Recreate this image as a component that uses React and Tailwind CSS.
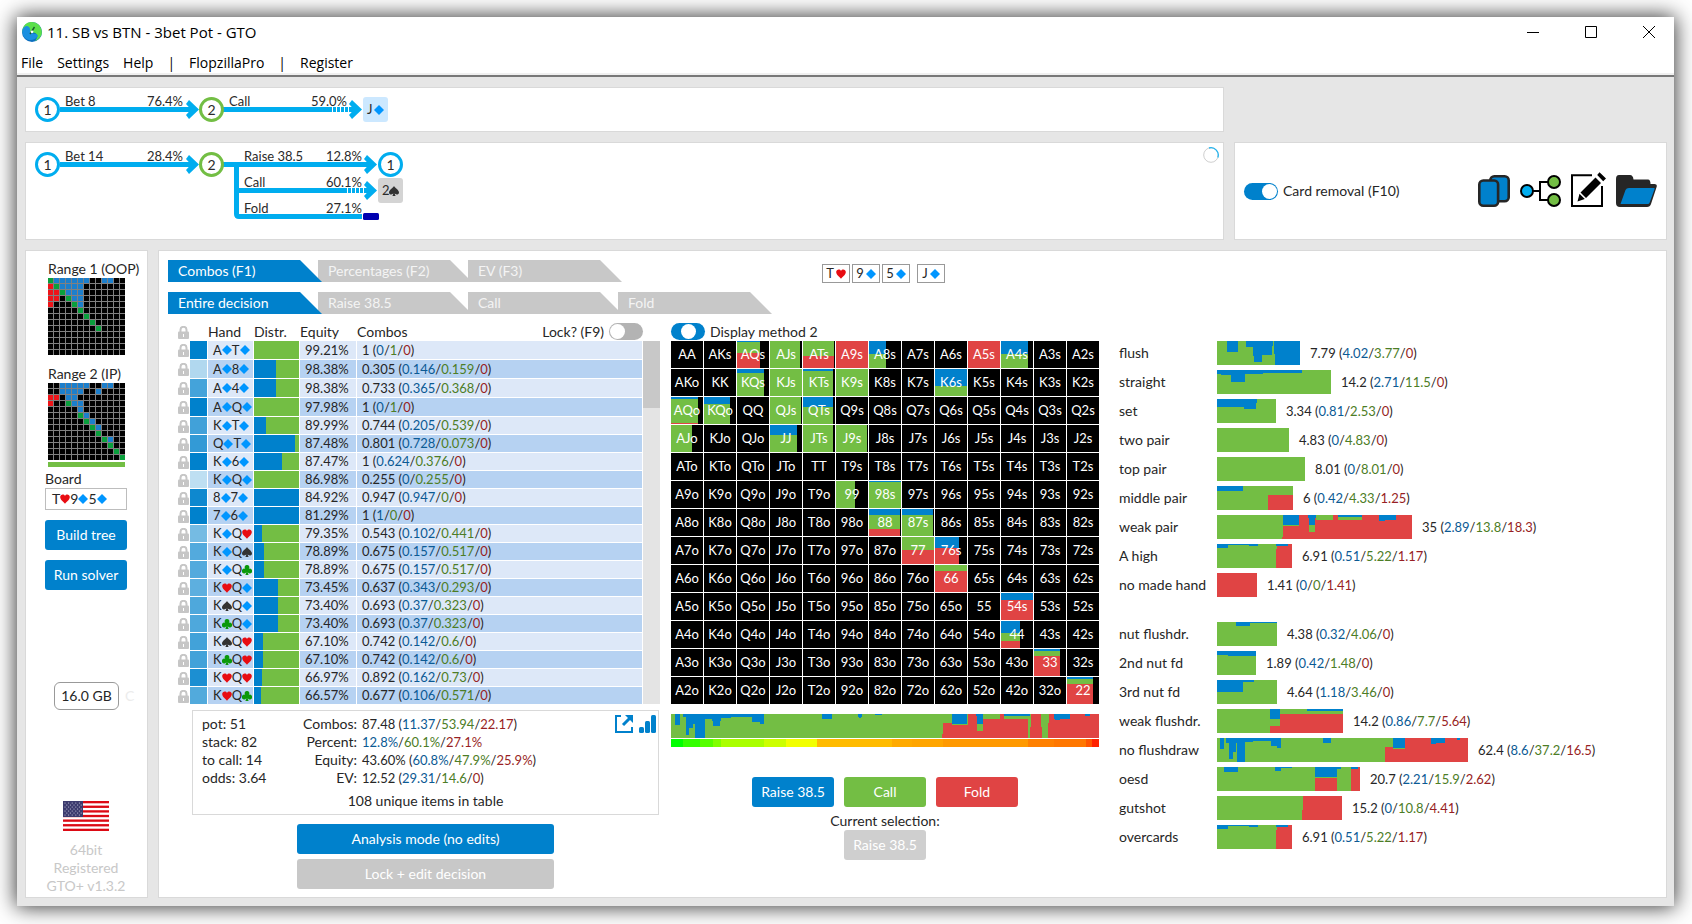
import React from "react";

const BLUE = "#0081cc";
const GREEN = "#73be44";
const RED = "#e04444";
const SKY = "#00adef";

const SUITS = {
  h: { name: "hearts", color: "#e80c12", path: "M5 9.8 C3.6 7.6 0.2 6 0.2 3 C0.2 0.2 4 -0.4 5 2 C6 -0.4 9.8 0.2 9.8 3 C9.8 6 6.4 7.6 5 9.8 Z" },
  d: { name: "diamonds", color: "#0096ff", path: "M5 0 L10 5 L5 10 L0 5 Z" },
  s: { name: "spades", color: "#333333", path: "M5 0 C6 2 10 4 10 6.4 C10 8.6 7 9 5.6 7.6 L6.6 10 H3.4 L4.4 7.6 C3 9 0 8.6 0 6.4 C0 4 4 2 5 0 Z" },
  c: { name: "clubs", color: "#0a990a", path: "M5 0 A2.3 2.3 0 0 1 6.8 3.8 A2.4 2.4 0 1 1 5.6 7 L6.6 10 H3.4 L4.4 7 A2.4 2.4 0 1 1 3.2 3.8 A2.3 2.3 0 0 1 5 0 Z" },
};

// [hand, equity, combos, raise, call, fold]
const HANDS = [
  ["AdTd", "99.21%", "1", "0", "1", "0"],
  ["Ad8d", "98.38%", "0.305", "0.146", "0.159", "0"],
  ["Ad4d", "98.38%", "0.733", "0.365", "0.368", "0"],
  ["AdQd", "97.98%", "1", "0", "1", "0"],
  ["KdTd", "89.99%", "0.744", "0.205", "0.539", "0"],
  ["QdTd", "87.48%", "0.801", "0.728", "0.073", "0"],
  ["Kd6d", "87.47%", "1", "0.624", "0.376", "0"],
  ["KdQd", "86.98%", "0.255", "0", "0.255", "0"],
  ["8d7d", "84.92%", "0.947", "0.947", "0", "0"],
  ["7d6d", "81.29%", "1", "1", "0", "0"],
  ["KdQh", "79.35%", "0.543", "0.102", "0.441", "0"],
  ["KdQs", "78.89%", "0.675", "0.157", "0.517", "0"],
  ["KdQc", "78.89%", "0.675", "0.157", "0.517", "0"],
  ["KhQd", "73.45%", "0.637", "0.343", "0.293", "0"],
  ["KsQd", "73.40%", "0.693", "0.37", "0.323", "0"],
  ["KcQd", "73.40%", "0.693", "0.37", "0.323", "0"],
  ["KsQh", "67.10%", "0.742", "0.142", "0.6", "0"],
  ["KcQh", "67.10%", "0.742", "0.142", "0.6", "0"],
  ["KhQh", "66.97%", "0.892", "0.162", "0.73", "0"],
  ["KhQc", "66.57%", "0.677", "0.106", "0.571", "0"],
];

// [width of 32, raise height, call height, fold height] of a 32x27 cell
const CELLS = {
  AQs: [23, 1, 11, 15], AJs: [30, 0, 27, 0], ATs: [31, 0, 15, 12], A9s: [32, 0, 0, 27],
  A8s: [17, 13, 14, 0], A5s: [32, 0, 0, 27], A4s: [27, 13, 14, 0],
  KQs: [27, 4, 23, 0], KJs: [32, 0, 27, 0], KTs: [30, 2, 25, 0], K9s: [32, 0, 27, 0], K6s: [32, 17, 10, 0],
  AQo: [27, 2, 24, 1], KQo: [26, 7, 20, 0], QJs: [31, 0, 27, 0], QTs: [30, 10, 17, 0],
  AJo: [21, 0, 27, 0], JJ: [27, 10, 17, 0], JTs: [30, 0, 27, 0], J9s: [31, 0, 27, 0],
  99: [19, 0, 27, 0], "98s": [32, 1, 26, 0], 88: [31, 6, 14, 7], "87s": [31, 6, 21, 0],
  77: [32, 0, 13, 14], "76s": [24, 11, 0, 16], 66: [32, 0, 6, 21], "54s": [32, 7, 0, 20],
  44: [19, 12, 8, 7], 33: [26, 2, 5, 20], 22: [26, 2, 5, 20],
};

const RANKS = "AKQJT98765432".split("");

// b = suited, g = pair, r = offsuit
const RANGE_OOP = [
  "gbbbbbb..bb..", "rgbbbb.......", "rrgbbb.......", "rr.gbb.......", "r...gb.......",
  ".....g.......", "......g......", ".......g.....", "........g....", ".............",
  ".............", ".............", ".............",
];
const RANGE_IP = [
  "..bbbbb..bb..", "..bbbb..b....", "rr.bb........", "r..gbb.......", ".....b.......",
  ".....gb......", "......gb.....", ".......gb....", "........g....", ".........gb..",
  "..........g..", "...........g.", "............g",
];

// bar parts are [x, y, width, height, color] painted over green
const A_HIGH = [[60, 0, 15, 24, RED], [59, 5, 1, 19, RED], [0, 0, 11, 4, BLUE], [11, 0, 21, 1, BLUE], [32, 0, 9, 2, BLUE], [59, 0, 12, 2, BLUE]];

const MADE_HANDS = [
  ["flush", 83, "7.79", "4.02", "3.77", "0", [[10, 0, 11, 11, BLUE], [29, 0, 8, 6, BLUE], [36, 0, 1, 15, BLUE], [37, 0, 8, 21, BLUE], [45, 0, 10, 14, BLUE], [55, 0, 1, 5, BLUE], [57, 0, 1, 13, BLUE], [58, 0, 25, 24, BLUE]]],
  ["straight", 114, "14.2", "2.71", "11.5", "0", [[0, 0, 4, 4, BLUE], [4, 0, 10, 5, BLUE], [14, 0, 14, 12, BLUE], [28, 0, 18, 4, BLUE], [46, 0, 39, 3, BLUE]]],
  ["set", 59, "3.34", "0.81", "2.53", "0", [[0, 0, 27, 8, BLUE], [27, 0, 12, 10, BLUE], [39, 0, 1, 4, BLUE]]],
  ["two pair", 72, "4.83", "0", "4.83", "0", []],
  ["top pair", 88, "8.01", "0", "8.01", "0", []],
  ["middle pair", 76, "6", "0.42", "4.33", "1.25", [[0, 0, 26, 5, BLUE], [51, 9, 25, 15, RED]]],
  ["weak pair", 195, "35", "2.89", "13.8", "18.3", [[66, 11, 16, 13, RED], [65, 22, 1, 2, RED], [82, 0, 113, 24, RED], [66, 0, 16, 10, BLUE], [91, 0, 8, 3, BLUE], [92, 3, 6, 7, BLUE], [92, 10, 6, 7, GREEN], [99, 0, 17, 5, GREEN], [121, 2, 24, 3, GREEN], [121, 0, 24, 2, BLUE], [162, 0, 6, 6, BLUE], [168, 0, 11, 5, BLUE]]],
  ["A high", 75, "6.91", "0.51", "5.22", "1.17", A_HIGH],
  ["no made hand", 40, "1.41", "0", "0", "1.41", [[0, 0, 40, 24, RED]]],
];

const DRAWS = [
  ["nut flushdr.", 60, "4.38", "0.32", "4.06", "0", [[19, 0, 41, 1, BLUE], [19, 0, 14, 4, BLUE]]],
  ["2nd nut fd", 39, "1.89", "0.42", "1.48", "0", [[0, 0, 11, 4, BLUE], [11, 0, 28, 5, BLUE]]],
  ["3rd nut fd", 60, "4.64", "1.18", "3.46", "0", [[0, 0, 26, 12, BLUE], [26, 0, 11, 2, BLUE]]],
  ["weak flushdr.", 126, "14.2", "0.86", "7.7", "5.64", [[53, 0, 10, 10, BLUE], [53, 17, 10, 7, RED], [63, 5, 63, 19, RED], [90, 0, 36, 2, BLUE]]],
  ["no flushdraw", 251, "62.4", "8.6", "37.2", "16.5", [[3, 0, 4, 11, BLUE], [9, 0, 11, 5, BLUE], [12, 0, 4, 21, BLUE], [16, 0, 3, 14, BLUE], [20, 0, 8, 24, BLUE], [28, 0, 8, 4, BLUE], [36, 0, 18, 3, BLUE], [54, 0, 6, 8, BLUE], [60, 0, 4, 10, BLUE], [106, 0, 8, 5, BLUE], [168, 9, 8, 15, RED], [176, 11, 12, 13, RED], [176, 0, 12, 10, BLUE], [188, 0, 63, 24, RED], [214, 0, 5, 6, BLUE], [219, 0, 9, 5, BLUE], [240, 0, 3, 2, BLUE]]],
  ["oesd", 143, "20.7", "2.21", "15.9", "2.62", [[7, 0, 14, 5, BLUE], [58, 0, 6, 4, BLUE], [64, 0, 11, 1, BLUE], [98, 11, 22, 13, RED], [98, 0, 22, 10, BLUE], [120, 0, 4, 2, BLUE], [134, 0, 9, 24, RED], [134, 0, 7, 2, BLUE]]],
  ["gutshot", 125, "15.2", "0", "10.8", "4.41", [[86, 0, 39, 24, RED], [85, 14, 1, 10, RED]]],
  ["overcards", 75, "6.91", "0.51", "5.22", "1.17", A_HIGH],
];

const HISTOGRAM = [
  [4, 0, 5, 11, BLUE], [12, 0, 3, 3, BLUE], [15, 0, 3, 21, BLUE], [18, 0, 4, 14, BLUE], [22, 0, 2, 10, BLUE],
  [24, 0, 10, 24, BLUE], [34, 0, 7, 5, BLUE], [41, 0, 1, 7, BLUE], [42, 0, 7, 12, BLUE], [49, 0, 1, 7, BLUE],
  [50, 0, 10, 4, BLUE], [60, 0, 21, 3, BLUE], [81, 0, 8, 8, BLUE], [89, 0, 4, 10, BLUE], [151, 0, 10, 5, BLUE],
  [187, 0, 4, 3, BLUE], [188, 3, 2, 1, BLUE], [204, 0, 7, 1, BLUE], [271, 20, 1, 4, RED], [272, 9, 9, 15, RED],
  [281, 11, 15, 13, RED], [281, 0, 15, 10, BLUE], [297, 0, 9, 24, RED], [296, 11, 1, 13, RED], [305, 0, 7, 2, BLUE],
  [306, 0, 6, 10, BLUE], [306, 17, 6, 7, RED], [312, 5, 45, 19, RED], [329, 0, 4, 5, RED], [333, 0, 26, 2, BLUE],
  [359, 13, 1, 11, RED], [360, 0, 10, 24, RED], [370, 13, 1, 11, RED], [377, 9, 1, 15, RED], [378, 0, 50, 24, RED],
  [383, 0, 16, 5, BLUE], [384, 5, 5, 1, BLUE], [414, 0, 5, 2, BLUE],
];

const HEAT = [
  [12, "#00ff00"], [17, "#33ff00"], [13, "#55ff00"], [8, "#80ff00"], [43, "#aaff00"], [22, "#ccff00"],
  [31, "#f2ff00"], [75, "#ffbb00"], [20, "#ffaa00"], [31, "#ffa500"], [85, "#ff9900"], [26, "#ff8000"],
  [32, "#ff7700"], [6, "#ff5500"], [7, "#ff2200"],
];

function Suit({ suit }) {
  const { name, color, path } = SUITS[suit];
  return (
    <svg role="img" aria-label={name} className="inline-block size-2.5" viewBox="0 0 10 10">
      <path d={path} fill={color} />
    </svg>
  );
}

function Cards({ cards }) {
  return (
    <span className="inline-flex items-center">
      {cards.match(/../g).map((card, index) => (
        <React.Fragment key={index}>
          {card[0]}
          <Suit suit={card[1]} />
        </React.Fragment>
      ))}
    </span>
  );
}

function Split({ raise, call, fold }) {
  return (
    <>
      <span className="text-[#0b5a94]">{raise}</span>/<span className="text-[#4d7d26]">{call}</span>/
      <span className="text-[#981f24]">{fold}</span>
    </>
  );
}

function Lock() {
  return (
    <svg aria-hidden="true" className="block h-[13px] w-[11px]" viewBox="0 0 11 13">
      <path d="M2.5 6 V3.8 a3 3 0 0 1 6 0 V6" fill="none" stroke="#c6c6c6" strokeWidth="2" />
      <rect y="5.5" width="11" height="7.5" rx="1" fill="#c6c6c6" />
      <path d="M5 8h1v3H5z" fill="#fff" />
    </svg>
  );
}

function Logo() {
  return (
    <svg aria-hidden="true" className="size-5" viewBox="0 0 20 20">
      <circle cx="10" cy="10" r="10" fill="#0c6fc0" />
      <path d="M1 6 C3 1 8 -1 13 0.6 C18 2.4 21 8 19.4 13 C18 16 15 18.6 13 19 C17 14 15 11 11 10.6 C8 10.4 5 12 1.6 12 C0.2 10 0.2 8 1 6 Z" fill="#5be04a" />
      <path d="M0.4 8 C2 4 5 3 7 5 C9 7 7 10 9 11 C12 12.4 15 11 16 14 C13 19 6 19 3 16 C1 14 0 11 0.4 8 Z" fill="#1a8fe0" />
      <path d="M8 12 L12.5 5" stroke="#185c2a" strokeWidth="1.4" />
      <circle cx="10" cy="9.8" r="1.4" fill="#fff" />
    </svg>
  );
}

function Header() {
  const control = "flex size-3 items-center justify-center";
  return (
    <header className="border-b-2 border-[#787878] bg-white font-['Open_Sans',sans-serif] text-black">
      <div className="flex h-[30px] items-center gap-[5px] pl-[5px] pr-[19px]">
        <Logo />
        <h1 className="text-[15px] leading-5">11. SB vs BTN - 3bet Pot - GTO</h1>
        <div className="ml-auto flex gap-[46px]">
          <button aria-label="Minimize" className={control}>
            <svg className="size-3" viewBox="0 0 12 12" stroke="#000"><path d="M0 6.5h12" /></svg>
          </button>
          <button aria-label="Maximize" className={control}>
            <svg className="size-3" viewBox="0 0 12 12" stroke="#000" fill="none"><path d="M.5.5h11v11H.5z" /></svg>
          </button>
          <button aria-label="Close" className={control}>
            <svg className="size-3" viewBox="0 0 12 12" stroke="#000"><path d="M0 0l12 12M12 0L0 12" /></svg>
          </button>
        </div>
      </div>
      <nav className="flex h-7 items-center gap-3.5 border-b-2 border-[#f0f0f0] pl-1 pt-1.5 text-sm leading-5">
        <button>File</button>
        <button>Settings</button>
        <button>Help</button>
        <span>|</span>
        <button>FlopzillaPro</button>
        <span>|</span>
        <button>Register</button>
      </nav>
    </header>
  );
}

function Node({ x, y, label, color }) {
  return (
    <>
      <circle cx={x} cy={y} r="11" fill="#fff" stroke={color} strokeWidth="3" />
      <text x={x} y={y + 5} textAnchor="middle" fontSize="14">{label}</text>
    </>
  );
}

function Arrow({ from, to, y, dashed }) {
  return (
    <g fill={SKY}>
      <rect x={from} y={y - 2.5} width={to - 4 - from} height="5" />
      <path d={`M${to - 10} ${y - 9.5} L${to} ${y} L${to - 10} ${y + 9.5} L${to - 13} ${y + 5.5} L${to - 8} ${y} L${to - 13} ${y - 5.5} Z`} />
      {dashed && [30, 26, 22, 18, 14].map((d) => <rect key={d} x={to - d} y={y - 2.5} width="1" height="5" fill="#fff" />)}
    </g>
  );
}

function Step({ x, end, y, label, percent }) {
  return (
    <>
      <text x={x} y={y}>{label}</text>
      <text x={end} y={y} textAnchor="end">{percent}</text>
    </>
  );
}

function TreeCard({ x, y, rank, suit, fill }) {
  return (
    <>
      <rect x={x} y={y} width="25" height="25" rx="3" fill={fill} />
      <text x={x + 4} y={y + 17}>{rank}</text>
      <g transform={`translate(${x + 11} ${y + 8})`}>
        <path d={SUITS[suit].path} fill={SUITS[suit].color} />
      </g>
    </>
  );
}

function FlopTree() {
  return (
    <svg className="block" width="400" height="43" viewBox="26 88 400 43" fontSize="13" fill="#2a2a2a">
      <Arrow from={60} to={199} y={109.5} />
      <Arrow from={223} to={362} y={109.5} dashed />
      <Node x={47.5} y={109.5} label="1" color={SKY} />
      <Node x={211.5} y={109.5} label="2" color={GREEN} />
      <Step x={65} end={183} y={106} label="Bet 8" percent="76.4%" />
      <Step x={229} end={347} y={106} label="Call" percent="59.0%" />
      <TreeCard x={363} y={97} rank="J" suit="d" fill="#cce8ff" />
    </svg>
  );
}

function TurnTree() {
  return (
    <svg className="block" width="400" height="96" viewBox="26 143 400 96" fontSize="13" fill="#2a2a2a">
      <Arrow from={60} to={199} y={164.5} />
      <Arrow from={223} to={377} y={164.5} />
      <Arrow from={238} to={377} y={190.5} dashed />
      <path d="M236.5 164 V214 Q236.5 216.5 239 216.5 H362" fill="none" stroke={SKY} strokeWidth="5" />
      <rect x="363" y="213" width="16" height="7" rx="1.5" fill="#0000b0" />
      <Node x={47.5} y={164.5} label="1" color={SKY} />
      <Node x={211.5} y={164.5} label="2" color={GREEN} />
      <Node x={390.5} y={164.5} label="1" color={SKY} />
      <Step x={65} end={183} y={161} label="Bet 14" percent="28.4%" />
      <Step x={244} end={362} y={161} label="Raise 38.5" percent="12.8%" />
      <Step x={244} end={362} y={187} label="Call" percent="60.1%" />
      <Step x={244} end={362} y={213} label="Fold" percent="27.1%" />
      <TreeCard x={378} y={178} rank="2" suit="s" fill="#d4d4d4" />
    </svg>
  );
}

function Toggle({ id, className, ...props }) {
  return (
    <input
      id={id}
      type="checkbox"
      className={`flex h-[17px] w-[34px] shrink-0 appearance-none items-center rounded-full px-px before:size-[15px] before:rounded-full before:bg-white ${className}`}
      {...props}
    />
  );
}

function Toolbar() {
  return (
    <section className="flex w-[433px] shrink-0 items-center border border-[#d9d9d9] bg-white pl-[9px] pr-[9px]">
      <Toggle id="card_removal" className="justify-end bg-[#0081cc]" defaultChecked />
      <label htmlFor="card_removal" className="ml-[5px]">Card removal (F10)</label>
      <div className="ml-auto flex items-end gap-2.5 pb-1">
        <button aria-label="Cards">
          <svg className="block h-8 w-8" viewBox="0 0 32 32" fill={BLUE} stroke="#262626" strokeWidth="2.6">
            <rect x="12.3" y="1.3" width="18.4" height="25" rx="4" />
            <rect x="1.3" y="5.5" width="18.8" height="25.2" rx="4" />
          </svg>
        </button>
        <button aria-label="Tree">
          <svg className="block h-8 w-[41px]" viewBox="0 0 41 32" stroke="#000" strokeWidth="2">
            <path d="M12 16h8M28 7h-8v18h8" fill="none" />
            <circle cx="7" cy="16" r="6" fill={SKY} />
            <circle cx="34" cy="7" r="6" fill={GREEN} />
            <circle cx="34" cy="25" r="6" fill={GREEN} />
          </svg>
        </button>
        <button aria-label="Edit">
          <svg className="block h-[35px] w-[35px]" viewBox="0 0 35 35">
            <path d="M21 3.2H1V34h30V14" fill="none" stroke="#000" strokeWidth="2" />
            <path d="M24.5 5.5 L30 11 L15 26 L9.5 20.5 Z M8.5 21.8 L13.8 27 L6.5 29.5 Z M28.5 0.3 L35 6.6 L32.2 9.2 L26.2 3 Z" fill="#000" />
          </svg>
        </button>
        <button aria-label="Open">
          <svg className="block h-8 w-[41px]" viewBox="0 0 41 32">
            <path d="M3 0 H14 Q17 0 17.5 4.5 H32 Q34.5 4.5 34.5 9 H38.5 Q41.6 9 40.6 12 L35 29 Q34 32 31 32 H4 Q0 32 0 28 V4 Q0 0 3 0 Z" fill="#262626" />
            <path d="M13 13 H38 Q39 13 38.6 14 L33.5 28 Q33 29 32 29 H4.5 L9.5 15 Q10.4 13 13 13 Z" fill={BLUE} />
          </svg>
        </button>
      </div>
    </section>
  );
}

function RangeGrid({ rows }) {
  const colors = { b: "bg-[#1c7fcc]", g: "bg-[#0aa03c]", r: "bg-[#ee1418]", ".": "bg-black" };
  return (
    <div className="grid w-[77px] auto-rows-[5px] grid-cols-13 gap-px bg-[#808080]">
      {rows.join("").split("").map((c, index) => <i key={index} className={colors[c]} />)}
    </div>
  );
}

function Flag() {
  return (
    <svg role="img" aria-label="United States" className="block h-[30px] w-[46px]" viewBox="0 0 46 30">
      <rect width="46" height="30" fill="#fff" />
      {[0, 1, 2, 3, 4, 5, 6].map((i) => <rect key={i} y={i * 4.62} width="46" height="2.31" fill="#dc0a14" />)}
      <rect width="20" height="16" fill="#3c3b6e" />
      {[0, 1, 2, 3, 4, 5, 6].map((r) =>
        [0, 1, 2, 3, 4].map((c) => <circle key={`${r}${c}`} cx={2 + c * 3.6 + (r % 2) * 1.8} cy={2 + r * 2} r="0.6" fill="#c8c8dc" />)
      )}
    </svg>
  );
}

const BUTTON = "h-[30px] rounded-[3px] text-center text-sm text-white";

function Sidebar() {
  return (
    <aside className="flex w-[123px] shrink-0 flex-col border border-[#d9d9d9] bg-white pl-[19px] pt-[9px]">
      <div className="pl-[3px]">
        <h2 className="h-[18px] whitespace-nowrap leading-[18px]">Range 1 (OOP)</h2>
        <RangeGrid rows={RANGE_OOP} />
        <h2 className="mt-2.5 h-[18px] leading-[18px]">Range 2 (IP)</h2>
        <RangeGrid rows={RANGE_IP} />
        <div className="mt-0.5 h-[5px] w-[77px] bg-[#73be44]" />
      </div>
      <span id="board_label" className="mt-[3px] h-[18px] leading-[18px]">Board</span>
      <button aria-labelledby="board_label" className="flex h-[22px] w-[82px] items-center border border-[#bdbdbd] pl-1.5">
        <Cards cards="Th9d5d" />
      </button>
      <button className={`${BUTTON} mt-2.5 w-[82px] bg-[#0081cc]`}>Build tree</button>
      <button className={`${BUTTON} mt-2.5 w-[82px] bg-[#0081cc]`}>Run solver</button>
      <div className="mt-[92px] flex items-center gap-1.5 pl-[9px]">
        <span className="flex h-7 w-[65px] items-center justify-center rounded-md border border-[#999]">16.0 GB</span>
        <span className="text-[#ececec]">C</span>
      </div>
      <footer className="mb-0.5 mt-auto flex w-[82px] flex-col items-center whitespace-nowrap text-sm leading-[18px] text-[#c8c8c8]">
        <Flag />
        <p className="mt-2.5">64bit</p>
        <p>Registered</p>
        <p>GTO+ v1.3.2</p>
      </footer>
    </aside>
  );
}

function Tabs({ tabs }) {
  return (
    <div className="isolate flex">
      {tabs.map((tab, index) => (
        <button
          key={tab}
          className={`-mr-1 h-[22px] w-[154px] pl-2.5 text-left text-sm [clip-path:polygon(0_0,132px_0,100%_100%,0_100%)] ${
            index === 0 ? "relative z-10 bg-[#0081cc] text-white" : "bg-[#c8c8c8] text-[#f4f4f4]"
          }`}
        >
          {tab}
        </button>
      ))}
    </div>
  );
}

function HandTable() {
  const th = "p-0 text-left font-normal";
  return (
    <div className="flex">
      <table className="w-[465px] table-fixed border-separate border-spacing-0">
        <colgroup>
          <col className="w-3" />
          <col className="w-[18px]" />
          <col className="w-[46px]" />
          <col className="w-[46px]" />
          <col className="w-[57px]" />
          <col />
        </colgroup>
        <thead>
          <tr className="h-[18px] leading-[18px]">
            <th className={th}><Lock /></th>
            <th className={th}></th>
            <th className={th}>Hand</th>
            <th className={th}>Distr.</th>
            <th className={th}>Equity</th>
            <th className={th}>
              <div className="flex">
                Combos
                <label htmlFor="lock" className="ml-auto mr-[5px]">Lock? (F9)</label>
                <Toggle id="lock" className="bg-[#b3b3b3]" />
              </div>
            </th>
          </tr>
        </thead>
        <tbody className="text-[13px]">
          {HANDS.map(([hand, equity, combos, raise, call, fold], index) => {
            const share = (100 * raise) / combos;
            const td = `border-b border-r border-white p-0 ${index % 2 ? "bg-[#b6d2f2]" : "bg-[#dde8f8]"}`;
            return (
              <tr key={hand} className={index < 4 ? "h-[19px] leading-[18px]" : "h-[18px] leading-[17px]"}>
                <td className="p-0"><Lock /></td>
                <td className="border-b border-r border-white p-0" style={{ backgroundColor: `rgba(0,129,204,${combos})` }} />
                <td className={`${td} pl-[5px]`}><Cards cards={hand} /></td>
                <td
                  className="border-b border-r border-white p-0"
                  style={{ background: `linear-gradient(to right, ${BLUE} ${share}%, ${GREEN} ${share}%)` }}
                />
                <td className={`${td} pl-[5px]`}>{equity}</td>
                <td className={`${td} pl-[5px]`}>
                  {combos} (<Split raise={raise} call={call} fold={fold} />)
                </td>
              </tr>
            );
          })}
        </tbody>
      </table>
      <div className="mb-px mt-[18px] w-[17px] bg-[#e4e4e4]">
        <div className="h-[67px] bg-[#c8c8c8]" />
      </div>
    </div>
  );
}

function Summary() {
  return (
    <section className="ml-3.5 mr-px mt-[5px] h-[105px] border border-[#d9d9d9] px-[9px] pt-1 leading-[18px]">
      <div className="flex">
        <div className="w-[88px]">
          <p>pot: 51</p>
          <p>stack: 82</p>
          <p>to call: 14</p>
          <p>odds: 3.64</p>
        </div>
        <dl className="grid grid-cols-[67px_auto] gap-x-[5px]">
          <dt className="text-right">Combos:</dt>
          <dd className="text-[13px]">87.48 (<Split raise="11.37" call="53.94" fold="22.17" />)</dd>
          <dt className="text-right">Percent:</dt>
          <dd className="text-[13px]"><Split raise="12.8%" call="60.1%" fold="27.1%" /></dd>
          <dt className="text-right">Equity:</dt>
          <dd className="text-[13px]">43.60% (<Split raise="60.8%" call="47.9%" fold="25.9%" />)</dd>
          <dt className="text-right">EV:</dt>
          <dd className="text-[13px]">12.52 (<Split raise="29.31" call="14.6" fold="0" />)</dd>
        </dl>
        <div className="ml-auto flex gap-1.5">
          <button aria-label="Open in window" className="h-[18px]">
            <svg className="block size-[18px]" viewBox="0 0 18 18" fill="none" stroke={BLUE} strokeWidth="2">
              <path d="M6 1H1v16h16v-5" />
              <path d="M8 10L15 3" strokeWidth="3" />
              <path d="M10 0h8v8z" fill={BLUE} stroke="none" />
            </svg>
          </button>
          <button aria-label="Chart" className="-mr-2 h-[18px]">
            <svg className="block size-[18px]" viewBox="0 0 18 18" fill={BLUE}>
              <rect y="12" width="5" height="6" rx="1.5" />
              <rect x="6" y="6" width="5" height="12" rx="1.5" />
              <rect x="12" width="5" height="18" rx="1.5" />
            </svg>
          </button>
        </div>
      </div>
      <p className="mt-[5px] text-center">108 unique items in table</p>
    </section>
  );
}

function cellStyle([width, raise, call, fold]) {
  const a = (raise / 27) * 100;
  const b = ((raise + call) / 27) * 100;
  return {
    backgroundImage: `linear-gradient(${BLUE} ${a}%, ${GREEN} ${a}%, ${GREEN} ${b}%, ${RED} ${b}%)`,
    backgroundSize: `${(width / 32) * 100}% 100%`,
    backgroundRepeat: "no-repeat",
  };
}

function Matrix() {
  return (
    <div className="grid auto-rows-[27px] grid-cols-13 gap-px text-white">
      {RANKS.map((row, i) =>
        RANKS.map((col, j) => {
          const hand = i === j ? row + row : i < j ? `${row}${col}s` : `${col}${row}o`;
          return (
            <div
              key={hand}
              className="flex items-center justify-center bg-black text-[13px]"
              style={CELLS[hand] && cellStyle(CELLS[hand])}
            >
              {hand}
            </div>
          );
        })
      )}
    </div>
  );
}

function Bar({ width, parts }) {
  return (
    <svg className="block shrink-0" width={width} height="24" shapeRendering="crispEdges" aria-hidden="true">
      <rect width={width} height="24" fill={GREEN} />
      {parts.map(([x, y, w, h, fill], index) => (
        <rect key={index} x={x} y={y} width={w} height={h} fill={fill} />
      ))}
    </svg>
  );
}

function Stats({ rows }) {
  return (
    <ul className="flex flex-col gap-[5px]">
      {rows.map(([name, width, total, raise, call, fold, parts]) => (
        <li key={name} className="flex h-6 items-center whitespace-nowrap">
          <span className="w-[98px] shrink-0">{name}</span>
          <Bar width={width} parts={parts} />
          <span className="ml-2.5 text-[13px]">
            {total} (<Split raise={raise} call={call} fold={fold} />)
          </span>
        </li>
      ))}
    </ul>
  );
}

function BoardCard({ card, className = "" }) {
  return (
    <span className={`flex h-[19px] w-7 items-center justify-center gap-0.5 border border-[#999] text-[13px] ${className}`}>
      {card[0]}
      <Suit suit={card[1]} />
    </span>
  );
}

function Workspace() {
  return (
    <main className="min-w-0 flex-1 border border-[#d9d9d9] bg-white pb-2 pl-[9px] pt-[9px]">
      <div className="flex h-[22px] items-start">
        <Tabs tabs={["Combos (F1)", "Percentages (F2)", "EV (F3)"]} />
        <div className="ml-[204px] mt-1 flex gap-0.5">
          <BoardCard card="Th" />
          <BoardCard card="9d" />
          <BoardCard card="5d" />
          <BoardCard card="Jd" className="ml-[5px]" />
        </div>
      </div>
      <div className="mt-2.5">
        <Tabs tabs={["Entire decision", "Raise 38.5", "Call", "Fold"]} />
      </div>
      <div className="mt-[9px] flex pl-2.5">
        <div className="w-[482px] shrink-0">
          <HandTable />
          <Summary />
          <div className="ml-[119px] mt-[9px] flex w-[257px] flex-col gap-[5px]">
            <button className={`${BUTTON} bg-[#0081cc]`}>Analysis mode (no edits)</button>
            <button className={`${BUTTON} bg-[#c8c8c8]`}>Lock + edit decision</button>
          </div>
        </div>
        <div className="ml-[11px] w-[428px] shrink-0">
          <div className="flex h-[18px] leading-[18px]">
            <Toggle id="display_method" className="justify-center bg-[#0081cc]" />
            <label htmlFor="display_method" className="ml-[5px]">Display method 2</label>
          </div>
          <Matrix />
          <div className="mt-2.5">
            <Bar width={428} parts={HISTOGRAM} />
          </div>
          <div className="mt-px flex h-2">
            {HEAT.map(([width, color]) => (
              <i key={color} style={{ width: `${(width / 428) * 100}%`, backgroundColor: color }} />
            ))}
          </div>
          <div className="mt-[30px] flex justify-center gap-2.5">
            <button className={`${BUTTON} w-[82px] bg-[#0081cc]`}>Raise 38.5</button>
            <button className={`${BUTTON} w-[82px] bg-[#73be44]`}>Call</button>
            <button className={`${BUTTON} w-[82px] bg-[#e04444]`}>Fold</button>
          </div>
          <div className="flex flex-col items-center">
            <p className="h-[23px] pt-1 leading-[19px]">Current selection:</p>
            <button className={`${BUTTON} w-[82px] bg-[#cfcfcf]`} disabled>Raise 38.5</button>
          </div>
        </div>
        <div className="ml-5 flex min-w-0 flex-1 flex-col gap-[25px] pt-[18px]">
          <Stats rows={MADE_HANDS} />
          <Stats rows={DRAWS} />
        </div>
      </div>
    </main>
  );
}

export default function App() {
  return (
    <div className="flex min-h-screen bg-white pb-[18px] pl-[17px] pr-[18px] pt-[17px] font-['Lato','Liberation_Sans',sans-serif] text-sm text-[#262626]">
      <div className="flex flex-1 flex-col bg-[#e6e6e6] shadow-[0_0_20px_1px_rgba(0,0,0,0.8)]">
        <Header />
        <div className="flex flex-1 flex-col gap-2.5 pb-2 pl-2 pr-[7px] pt-2.5">
          <div className="mr-[443px] border border-[#d9d9d9] bg-white">
            <FlopTree />
          </div>
          <div className="flex gap-2.5">
            <section className="flex flex-1 items-start justify-between border border-[#d9d9d9] bg-white">
              <TurnTree />
              <svg role="img" aria-label="Working" className="mr-1 mt-1 size-4" viewBox="0 0 16 16" fill="none">
                <circle cx="8" cy="8" r="7.3" stroke="#cfcfcf" />
                <path d="M6 1a7.3 7.3 0 0 1 8.8 9.5" stroke="#22b4f0" strokeWidth="1.3" />
              </svg>
            </section>
            <Toolbar />
          </div>
          <div className="flex flex-1 gap-2.5">
            <Sidebar />
            <Workspace />
          </div>
        </div>
      </div>
    </div>
  );
}
